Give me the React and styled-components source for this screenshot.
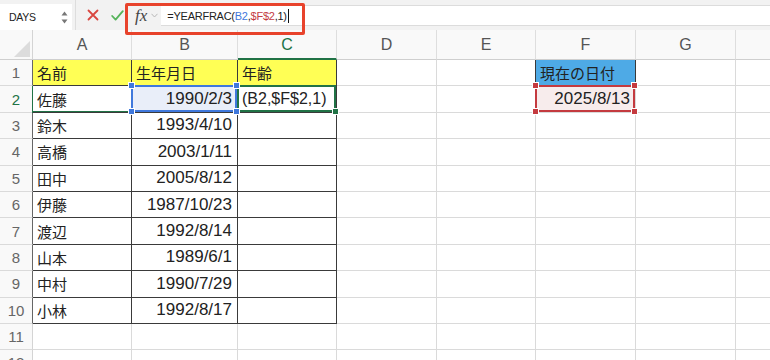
import React from "react";
import styled, { createGlobalStyle, css } from "styled-components";

const GlobalStyle = createGlobalStyle`
  html, body {
    margin: 0;
    padding: 0;
    background: #fff;
    overflow: hidden;
  }
  body {
    font-family: "Liberation Sans", "Noto Sans CJK JP", sans-serif;
  }
`;

const GREEN = "#217346";
const BLUE = "#3f78dc";
const RED = "#c43a3f";
const LINE = "#3a3a3a";
const GRID = "#dadada";

const columns = [
  { key: "A", width: 99 },
  { key: "B", width: 106 },
  { key: "C", width: 99 },
  { key: "D", width: 100 },
  { key: "E", width: 99 },
  { key: "F", width: 100 },
  { key: "G", width: 100 },
  { key: "H", width: 100 },
];

const people = [
  ["佐藤", "1990/2/3"],
  ["鈴木", "1993/4/10"],
  ["高橋", "2003/1/11"],
  ["田中", "2005/8/12"],
  ["伊藤", "1987/10/23"],
  ["渡辺", "1992/8/14"],
  ["山本", "1989/6/1"],
  ["中村", "1990/7/29"],
  ["小林", "1992/8/17"],
];

function buildRows() {
  const rows = [];
  rows.push({
    A: { text: "名前", bg: "#ffff55", boxed: true },
    B: { text: "生年月日", bg: "#ffff55", boxed: true },
    C: { text: "年齢", bg: "#ffff55", boxed: true },
    F: { text: "現在の日付", bg: "#4eaae6", framed: true },
  });
  people.forEach(([name, date], i) => {
    const row = {
      A: { text: name, boxed: true },
      B: { text: date, num: true, boxed: true },
      C: { text: "", boxed: true },
    };
    if (i === 0) {
      row.A.mark = true;
      row.B.sel = "blue";
      row.B.bg = "#e9eef9";
      row.C = { text: "(B2,$F$2,1)", boxed: true, sel: "green", wide: true };
      row.F = { text: "2025/8/13", num: true, sel: "red", bg: "#f7ecec" };
    }
    rows.push(row);
  });
  rows.push({}, {});
  return rows;
}

function Handles({ color, corners }) {
  return corners.map((c) => <Handle key={c} $corner={c} $color={color} />);
}

function Cell({ cell }) {
  const c = cell || {};
  return (
    <CellBox
      $bg={c.bg}
      $num={c.num}
      $boxed={c.boxed}
      $framed={c.framed}
      $mark={c.mark}
      $wide={c.wide}
    >
      {c.text}
      {c.sel === "blue" && (
        <>
          <Frame $color={BLUE} $w={2} />
          <Handles color={BLUE} corners={["tl", "tr", "bl", "br"]} />
        </>
      )}
      {c.sel === "red" && (
        <>
          <Frame $color={RED} $w={2} />
          <Handles color={RED} corners={["tl", "tr", "bl", "br"]} />
        </>
      )}
      {c.sel === "green" && (
        <>
          <Frame $color={GREEN} $w={2} />
          <Handles color={GREEN} corners={["br"]} />
        </>
      )}
    </CellBox>
  );
}

export default function App() {
  const rows = buildRows();
  return (
    <Page>
      <GlobalStyle />
      <Toolbar>
        <NameBox>
          DAYS
          <Spinner>
            <svg width="7" height="13" viewBox="0 0 7 13">
              <path d="M3.5 0.5 L6.5 4.5 L0.5 4.5 Z" fill="#777" />
              <path d="M3.5 12.5 L6.5 8.5 L0.5 8.5 Z" fill="#777" />
            </svg>
          </Spinner>
        </NameBox>
        <Divider />
        <ActionIcon>
          <svg width="12" height="12" viewBox="0 0 12 12">
            <path d="M1.5 1.5 L10.5 10.5 M10.5 1.5 L1.5 10.5" stroke="#d9463f" strokeWidth="1.8" strokeLinecap="round" />
          </svg>
        </ActionIcon>
        <ActionIcon>
          <svg width="13" height="11" viewBox="0 0 13 11">
            <path d="M1.2 6 L4.6 9.6 L11.8 1.2" stroke="#55b35a" strokeWidth="1.8" fill="none" strokeLinecap="round" strokeLinejoin="round" />
          </svg>
        </ActionIcon>
        <FxLabel>fx</FxLabel>
        <FxChevron>
          <svg width="7" height="5" viewBox="0 0 7 5">
            <path d="M0.5 0.8 L3.5 4 L6.5 0.8" stroke="#b8b8b8" strokeWidth="1" fill="none" />
          </svg>
        </FxChevron>
        <FormulaInput>
          =YEARFRAC(<Ref $color={BLUE}>B2</Ref>,<Ref $color={RED}>$F$2</Ref>,1)
          <Caret />
        </FormulaInput>
        <Highlight />
      </Toolbar>

      <Sheet>
        <Corner>
          <svg width="16" height="16" viewBox="0 0 16 16">
            <path d="M16 0 L16 16 L0 16 Z" fill="#dcdcdc" />
          </svg>
        </Corner>
        {columns.map((col) => (
          <ColHead key={col.key} $active={col.key === "C"}>
            {col.key}
          </ColHead>
        ))}
        {rows.map((row, r) => (
          <React.Fragment key={r}>
            <RowHead $active={r === 1} $edge={r < 10}>
              {r + 1}
            </RowHead>
            {columns.map((col) => (
              <Cell key={col.key} cell={row[col.key]} />
            ))}
          </React.Fragment>
        ))}
      </Sheet>
    </Page>
  );
}

const Page = styled.div`
  width: 770px;
  height: 360px;
  overflow: hidden;
  position: relative;
  background: #fff;
`;

const Toolbar = styled.div`
  position: relative;
  display: flex;
  align-items: flex-start;
  height: 30px;
  background: #f2f2f2;
`;

const NameBox = styled.div`
  box-sizing: border-box;
  width: 72px;
  height: 26px;
  margin-top: 4px;
  padding: 0 4px 0 9px;
  background: #fff;
  display: flex;
  align-items: center;
  justify-content: space-between;
  font-size: 10.5px;
  letter-spacing: -0.3px;
  color: #222;
`;

const Spinner = styled.span`
  display: flex;
  align-items: center;
`;

const Divider = styled.div`
  width: 1px;
  height: 30px;
  margin: 0 5px 0 3px;
  background: #dddddd;
`;

const ActionIcon = styled.div`
  width: 24px;
  height: 30px;
  display: flex;
  align-items: center;
  justify-content: center;
`;

const FxLabel = styled.span`
  margin-left: 6px;
  height: 30px;
  line-height: 32px;
  font-family: "Liberation Serif", serif;
  font-style: italic;
  font-size: 17px;
  color: #444;
`;

const FxChevron = styled.span`
  margin-left: 4px;
  height: 30px;
  display: flex;
  align-items: center;
`;

const FormulaInput = styled.div`
  box-sizing: border-box;
  flex: 1;
  height: 21px;
  margin: 5px 0 0 3px;
  padding-left: 6px;
  background: #fff;
  border-top: 1px solid #dcdcdc;
  border-bottom: 1px solid #dcdcdc;
  display: flex;
  align-items: center;
  font-size: 11px;
  letter-spacing: -0.25px;
  color: #222;
  white-space: nowrap;
`;

const Ref = styled.span`
  color: ${(p) => p.$color};
`;

const Caret = styled.span`
  width: 1px;
  height: 14px;
  margin-left: 1px;
  background: #111;
`;

const Highlight = styled.div`
  position: absolute;
  left: 125px;
  top: 3px;
  width: 180px;
  height: 32px;
  box-sizing: border-box;
  border: 3px solid #e8432c;
  border-radius: 2px;
  z-index: 5;
  pointer-events: none;
`;

const Sheet = styled.div`
  display: grid;
  grid-template-columns: 33px ${columns.map((c) => `${c.width}px`).join(" ")};
  grid-template-rows: 30px;
  grid-auto-rows: 26.4px;
`;

const Corner = styled.div`
  box-sizing: border-box;
  background: #f9f9f9;
  border-right: 1px solid #d4d4d4;
  border-bottom: 1px solid #cfcfcf;
  display: flex;
  align-items: flex-end;
  justify-content: flex-end;
  padding: 0 2px 2px 0;
`;

const ColHead = styled.div`
  box-sizing: border-box;
  background: #f9f9f9;
  border-right: 1px solid #dedede;
  border-bottom: 1px solid #cfcfcf;
  display: flex;
  align-items: center;
  justify-content: center;
  font-size: 16px;
  color: #555;
  ${(p) =>
    p.$active &&
    css`
      color: ${GREEN};
      border-bottom: 2px solid ${GREEN};
      padding-top: 1px;
    `}
`;

const RowHead = styled.div`
  box-sizing: border-box;
  background: #f9f9f9;
  border-right: 1px solid ${(p) => (p.$edge ? "#666" : "#d4d4d4")};
  border-bottom: 1px solid #dadada;
  display: flex;
  align-items: center;
  justify-content: center;
  font-size: 15px;
  color: ${(p) => (p.$active ? GREEN : "#666")};
  ${(p) =>
    p.$active &&
    css`
      border-right-color: ${GREEN};
    `}
`;

const CellBox = styled.div`
  position: relative;
  box-sizing: border-box;
  min-width: 0;
  background: ${(p) => p.$bg || "#fff"};
  border-right: 1px solid ${(p) => (p.$boxed || p.$framed ? LINE : GRID)};
  border-bottom: 1px solid ${(p) => (p.$boxed || p.$framed ? LINE : GRID)};
  display: flex;
  align-items: center;
  justify-content: ${(p) => (p.$num ? "flex-end" : "flex-start")};
  padding: ${(p) => (p.$num ? "0 5px 0 0" : "0 0 0 4px")};
  font-size: ${(p) => (p.$num ? "17px" : p.$wide ? "16px" : "15px")};
  color: #222;
  white-space: nowrap;
  ${(p) =>
    p.$framed &&
    css`
      box-shadow: -1px 0 0 ${LINE};
    `}
  ${(p) =>
    p.$mark &&
    css`
      box-shadow: inset 0 -1px 0 ${GREEN}, -1px 0 0 ${GREEN};
    `}
`;

const Frame = styled.span`
  position: absolute;
  top: -1px;
  left: -1px;
  right: 0;
  bottom: 0;
  border: ${(p) => p.$w}px solid ${(p) => p.$color};
  pointer-events: none;
  z-index: 2;
`;

const Handle = styled.span`
  position: absolute;
  width: 5px;
  height: 5px;
  background: ${(p) => p.$color};
  border: 1px solid #fff;
  z-index: 3;
  ${(p) => (p.$corner[0] === "t" ? "top: -4px;" : "bottom: -3px;")}
  ${(p) => (p.$corner[1] === "l" ? "left: -4px;" : "right: -3px;")}
`;
